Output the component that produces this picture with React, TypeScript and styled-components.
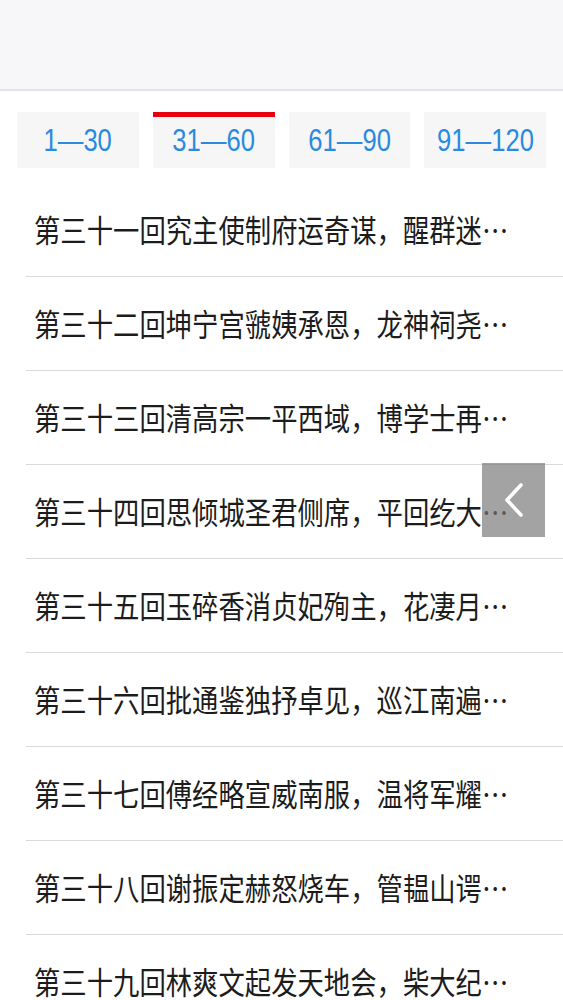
import React from "react";
import styled, { createGlobalStyle } from "styled-components";

const GlobalStyle = createGlobalStyle`
  html, body {
    margin: 0;
    padding: 0;
    background: #ffffff;
  }
  body {
    font-family: "Liberation Sans", "Noto Sans CJK SC", sans-serif;
  }
`;

const Page = styled.div`
  position: relative;
  width: 563px;
  min-height: 1000px;
  overflow: hidden;
  background: #fff;
`;

const Header = styled.header`
  height: 89px;
  background: #f7f6f9;
  border-bottom: 2px solid #e3e3e7;
`;

const Tabs = styled.nav`
  display: flex;
  gap: 14px;
  padding: 0 17px 0 17px;
  margin-top: 21px;
`;

const Tab = styled.div<{ $active?: boolean }>`
  flex: 1;
  height: 56px;
  box-sizing: border-box;
  background: #f6f6f6;
  border-top: 5px solid ${(p) => (p.$active ? "#e8000d" : "transparent")};
  display: flex;
  align-items: center;
  justify-content: center;
  padding-bottom: 5px;
`;

const TabLabel = styled.span`
  display: inline-block;
  font-family: "Liberation Sans", Arial, sans-serif;
  font-size: 32px;
  color: #2a8ae0;
  transform: scaleX(0.8);
  white-space: nowrap;
`;

const List = styled.ul`
  list-style: none;
  margin: 15px 0 0 26px;
  padding: 0;
`;

const Row = styled.li`
  height: 94px;
  box-sizing: border-box;
  border-bottom: 1.5px solid #d9d9d9;
  display: flex;
  align-items: center;
  padding-left: 8px;
  padding-bottom: 3px;
`;

const Title = styled.span`
  display: inline-block;
  font-family: "Noto Sans CJK SC", "Liberation Sans", sans-serif;
  font-size: 31px;
  color: #1c1c1c;
  white-space: nowrap;
  transform: scaleX(0.85);
  transform-origin: left center;
`;

const SideButton = styled.button`
  position: absolute;
  left: 482px;
  top: 463px;
  width: 63px;
  height: 74px;
  border: 0;
  padding: 0;
  background: rgba(120, 120, 120, 0.68);
  display: flex;
  align-items: center;
  justify-content: center;
`;

const tabs = ["1—30", "31—60", "61—90", "91—120"];

const chapters = [
  "第三十一回究主使制府运奇谋，醒群迷",
  "第三十二回坤宁宫虢姨承恩，龙神祠尧",
  "第三十三回清高宗一平西域，博学士再",
  "第三十四回思倾城圣君侧席，平回纥大",
  "第三十五回玉碎香消贞妃殉主，花凄月",
  "第三十六回批通鉴独抒卓见，巡江南遍",
  "第三十七回傅经略宣威南服，温将军耀",
  "第三十八回谢振定赫怒烧车，管韫山谔",
  "第三十九回林爽文起发天地会，柴大纪",
];

const App: React.FC = () => (
  <Page>
    <GlobalStyle />
    <Header />
    <Tabs>
      {tabs.map((t, i) => (
        <Tab key={t} $active={i === 1}>
          <TabLabel>{t}</TabLabel>
        </Tab>
      ))}
    </Tabs>
    <List>
      {chapters.map((c) => (
        <Row key={c}>
          <Title>{c}…</Title>
        </Row>
      ))}
    </List>
    <SideButton aria-label="返回">
      <svg width="22" height="36" viewBox="0 0 22 36">
        <polyline
          points="18,3 4,18 18,33"
          fill="none"
          stroke="#ffffff"
          strokeWidth="3.6"
          strokeLinecap="round"
          strokeLinejoin="round"
        />
      </svg>
    </SideButton>
  </Page>
);

export default App;
